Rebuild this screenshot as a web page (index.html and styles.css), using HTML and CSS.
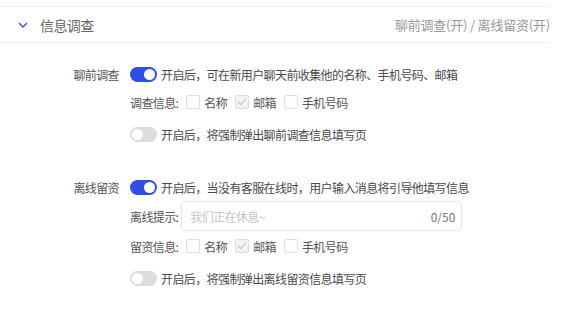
FILE: index.html
```html
<!DOCTYPE html>
<html lang="zh-CN">
<head>
<meta charset="UTF-8">
<title>信息调查</title>
<link rel="stylesheet" href="styles.css">
</head>
<body>
<div class="panel">
    <div class="panel-head">
        <svg class="chev" width="10" height="6" viewBox="0 0 10 6"><path d="M1 1l4 4 4-4" fill="none" stroke="#3a4fd8" stroke-width="1.4"/></svg>
        <span class="title">信息调查</span>
        <span class="summary">聊前调查(开) / 离线留资(开)</span>
    </div>

    <div class="panel-body">
        <!-- 聊前调查 -->
        <div class="section">
            <div class="row">
                <span class="label">聊前调查</span>
                <span class="switch on"></span>
                <span class="desc">开启后，可在新用户聊天前收集他的名称、手机号码、邮箱</span>
            </div>
            <div class="row sub">
                <span class="field">调查信息:</span>
                <span class="check"></span><span class="opt">名称</span>
                <span class="check checked"></span><span class="opt">邮箱</span>
                <span class="check"></span><span class="opt">手机号码</span>
            </div>
            <div class="row sub gap">
                <span class="switch"></span>
                <span class="desc">开启后，将强制弹出聊前调查信息填写页</span>
            </div>
        </div>

        <!-- 离线留资 -->
        <div class="section second">
            <div class="row">
                <span class="label">离线留资</span>
                <span class="switch on"></span>
                <span class="desc">开启后，当没有客服在线时，用户输入消息将引导他填写信息</span>
            </div>
            <div class="row sub tall">
                <span class="field">离线提示:</span>
                <div class="input">
                    <span class="ph">我们正在休息~</span>
                    <span class="cnt">0/50</span>
                </div>
            </div>
            <div class="row sub">
                <span class="field">留资信息:</span>
                <span class="check"></span><span class="opt">名称</span>
                <span class="check checked"></span><span class="opt">邮箱</span>
                <span class="check"></span><span class="opt">手机号码</span>
            </div>
            <div class="row sub gap">
                <span class="switch"></span>
                <span class="desc">开启后，将强制弹出离线留资信息填写页</span>
            </div>
        </div>
    </div>
</div>
</body>
</html>
```

FILE: styles.css
```css
*{box-sizing:border-box;}
body{
    margin:0;
    padding-top:6px;
    background:#fff;
    font-family:"Noto Sans CJK SC","Noto Sans",sans-serif;
    color:#444;
}
.panel{width:550px;}
.panel-head{
    display:flex;
    align-items:center;
    height:37px;
    border-top:1px solid #eee;
    border-bottom:1px solid #eee;
    padding-left:18px;
}
.chev{margin-right:12px;}
.title{font-size:14px;color:#666;letter-spacing:-0.6px;}
.summary{margin-left:auto;font-size:13px;color:#999;letter-spacing:-0.2px;}

.panel-body{padding-top:17px;}
.section.second{margin-top:25px;}
.row{
    display:flex;
    align-items:center;
    height:28px;
    font-size:12px;
    letter-spacing:-0.6px;
}
.row.sub{padding-left:130px;}
.row.gap{margin-top:4px;}
.row.tall{height:30px;margin-bottom:1px;}
.label{
    width:119px;
    text-align:right;
    margin-right:11px;
    color:#555;
}
.desc{color:#4a4a4a;margin-left:4px;}
.field{color:#555;margin-right:8px;}
.row.tall .field{margin-right:3px;}

.switch{
    position:relative;
    width:27px;
    height:15px;
    border-radius:8px;
    background:#dcdcdc;
}
.switch::after{
    content:"";
    position:absolute;
    top:2px;
    left:2px;
    width:11px;
    height:11px;
    border-radius:50%;
    background:#fff;
}
.switch.on{background:#2d4fe8;}
.switch.on::after{left:14px;}

.check{
    position:relative;
    width:14px;
    height:14px;
    border:1px solid #dedede;
    border-radius:2px;
    background:#fff;
    margin-right:4px;
}
.check.checked{background:#f2f2f2;}
.check.checked::after{
    content:"";
    position:absolute;
    left:4px;
    top:1px;
    width:3px;
    height:7px;
    border:solid #bbb;
    border-width:0 1.5px 1.5px 0;
    transform:rotate(45deg);
}
.opt{margin-right:8px;color:#555;}

.input{
    display:flex;
    align-items:center;
    justify-content:space-between;
    width:281px;
    height:30px;
    border:1px solid #e6e6e6;
    border-radius:3px;
    padding:0 6px 0 8px;
}
.ph{color:#c4c4c4;}
.cnt{color:#777;letter-spacing:0;}
```
